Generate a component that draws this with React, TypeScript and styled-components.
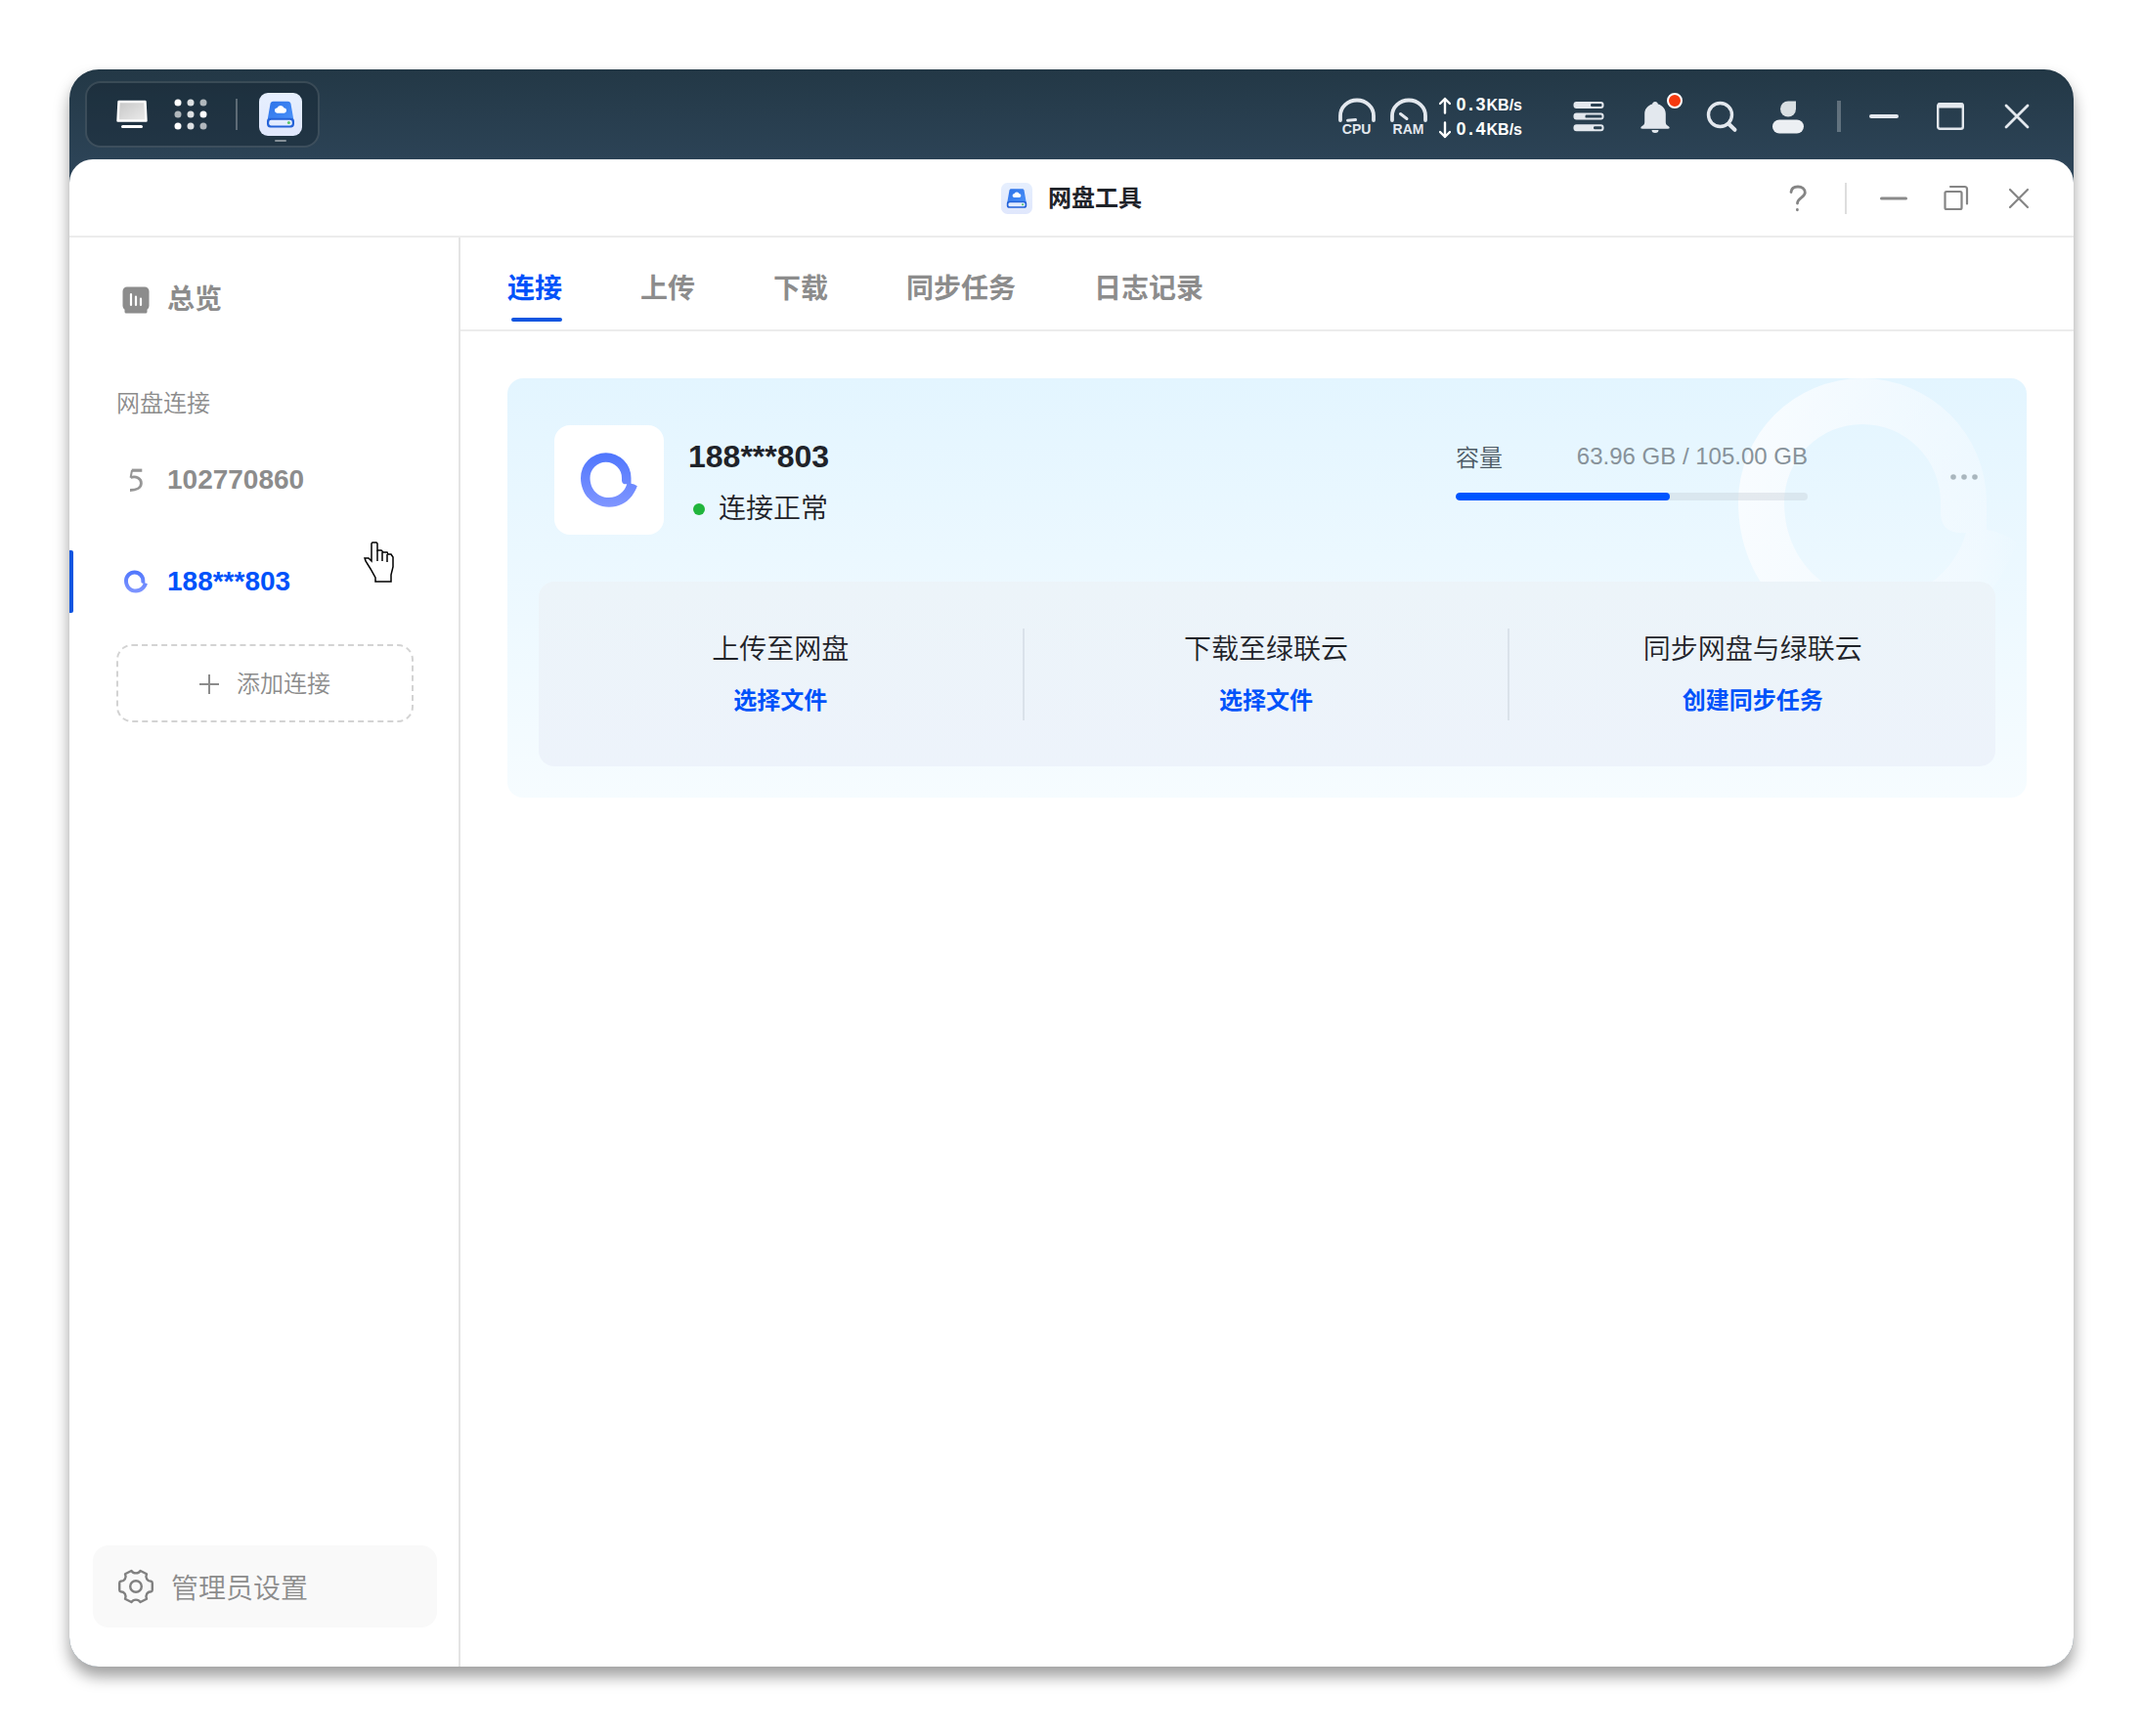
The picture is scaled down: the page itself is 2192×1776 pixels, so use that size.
import React, { useState } from "react";
import styled, { createGlobalStyle } from "styled-components";

const color = {
  blue: "#0052fa",
  accent: "#0f55e0",
  text: "#1f2329",
  muted: "#8c8c8c",
  line: "#ececec",
  chrome: "#e3e8ee",
};

const GlobalStyle = createGlobalStyle`
  *, *::before, *::after { box-sizing: border-box; }
  body {
    margin: 0;
    background: #fff;
    color: ${color.text};
    font-family: "Liberation Sans", "Noto Sans CJK SC", sans-serif;
  }
  button { font-family: inherit; }
`;

const Desktop = styled.div`
  min-height: 100vh;
  padding: 71px;
  display: flex;
  flex-direction: column;
`;

const Screen = styled.div`
  flex: 1;
  display: flex;
  flex-direction: column;
  border-radius: 30px;
  overflow: hidden;
  background: linear-gradient(#233846 0, #2c4356 92px, #2c4459 130px);
`;

const Shadow = styled.div`
  flex: 1;
  display: flex;
  border-radius: 30px;
  box-shadow: 0 10px 16px rgba(0, 0, 0, 0.38);
  > * { min-width: 0; }
`;

const Row = styled.div<{ $gap?: number }>`
  display: flex;
  align-items: center;
  gap: ${(p) => p.$gap ?? 0}px;
`;

const TopBar = styled.header`
  height: 92px;
  padding: 0 42px 0 16px;
  display: flex;
  align-items: center;
  justify-content: space-between;
`;

const Dock = styled.nav`
  height: 68px;
  padding: 0 16px 0 24px;
  display: flex;
  align-items: center;
  gap: 16px;
  border: 2px solid rgba(255, 255, 255, 0.13);
  border-radius: 16px;
  background: rgba(20, 36, 48, 0.4);
`;

const DockButton = styled.button<{ $running?: boolean }>`
  position: relative;
  width: 44px;
  height: 44px;
  padding: 0;
  border: 0;
  background: none;
  display: grid;
  place-items: center;
  &::after {
    content: "";
    display: ${(p) => (p.$running ? "block" : "none")};
    position: absolute;
    left: 16px;
    bottom: -6px;
    width: 12px;
    height: 2px;
    border-radius: 1px;
    background: rgba(255, 255, 255, 0.45);
  }
`;

const DockDivider = styled.span`
  width: 2px;
  height: 32px;
  margin: 0 6px 0 8px;
  background: rgba(255, 255, 255, 0.28);
`;

const StatusArea = styled.div`
  display: flex;
  align-items: center;
  gap: 52px;
  padding-top: 4px;
`;

const Gauge = styled.div`
  width: 38px;
  display: flex;
  flex-direction: column;
  align-items: center;
  color: ${color.chrome};
  font-size: 14px;
  line-height: 12px;
  font-weight: 700;
`;

const Monitors = styled.div`
  display: flex;
  align-items: center;
  gap: 12px;
`;

const Speeds = styled.div`
  padding-top: 2px;
  color: #fff;
  font-weight: 700;
  line-height: 24px;
`;

const SpeedRow = styled.div`
  display: flex;
  align-items: center;
  gap: 6px;
`;

const SpeedValue = styled.span`
  display: flex;
  align-items: baseline;
  font-size: 18px;
`;

const Digit = styled.span`
  width: 10px;
  text-align: center;
`;

const SpeedUnit = styled.span`
  padding-left: 1px;
  font-size: 16px;
`;

const IconButton = styled.button`
  position: relative;
  width: 32px;
  height: 32px;
  padding: 0;
  border: 0;
  background: none;
  display: grid;
  place-items: center;
  svg { overflow: visible; }
`;

const Badge = styled.span`
  position: absolute;
  top: -8px;
  right: -12px;
  width: 16px;
  height: 16px;
  border: 2px solid #fff;
  border-radius: 50%;
  background: #f5390f;
`;

const StatusDivider = styled.span`
  width: 4px;
  height: 32px;
  margin: 0 28px 0 34px;
  background: rgba(255, 255, 255, 0.27);
`;

const AppWindow = styled.section`
  flex: 1;
  display: flex;
  flex-direction: column;
  background: #fff;
  border-radius: 24px 24px 0 0;
  overflow: hidden;
`;

const TitleBar = styled.div`
  height: 80px;
  padding: 2px 40px 0;
  display: grid;
  grid-template-columns: 1fr auto 1fr;
  align-items: center;
  border-bottom: 2px solid ${color.line};
`;

const Title = styled.h1`
  grid-column: 2;
  margin: 0;
  display: flex;
  align-items: center;
  gap: 16px;
  font-size: 24px;
  line-height: 32px;
  font-weight: 700;
`;

const TitleActions = styled.div`
  justify-self: end;
  display: flex;
  align-items: center;
  gap: 32px;
`;

const TitleDivider = styled.span`
  width: 2px;
  height: 32px;
  background: #dedede;
`;

const Body = styled.div`
  flex: 1;
  display: grid;
  grid-template-columns: 400px minmax(0, 1fr);
`;

const Sidebar = styled.aside`
  display: flex;
  flex-direction: column;
  justify-content: space-between;
  padding: 32px 0 40px;
  border-right: 2px solid #e4e4e4;
`;

const NavButton = styled.button<{ $active?: boolean }>`
  width: 100%;
  height: 64px;
  padding: 0 48px;
  display: flex;
  align-items: center;
  gap: 12px;
  border: 0;
  background: none;
  color: ${(p) => (p.$active ? color.blue : color.muted)};
  font-size: 28px;
  line-height: 40px;
  font-weight: 700;
  &::before {
    content: "";
    display: ${(p) => (p.$active ? "block" : "none")};
    position: absolute;
    left: 0;
    top: 0;
    width: 4px;
    height: 64px;
    border-radius: 0 2px 2px 0;
    background: ${color.accent};
  }
`;

const NavIcon = styled.span`
  width: 40px;
  height: 40px;
  display: grid;
  place-items: center;
`;

const SectionLabel = styled.h2`
  margin: 58px 48px 30px;
  color: ${color.muted};
  font-size: 24px;
  line-height: 32px;
  font-weight: 350;
`;

const NavList = styled.ul`
  margin: 0;
  padding: 0;
  list-style: none;
  display: flex;
  flex-direction: column;
  gap: 40px;
`;

const NavItem = styled.li`
  position: relative;
`;

const Pointer = styled.svg`
  position: absolute;
  left: 301px;
  top: -9px;
  pointer-events: none;
`;

const AddButton = styled.button`
  width: calc(100% - 94px);
  height: 80px;
  margin: 32px 46px 0 48px;
  padding: 2px 0 0;
  display: flex;
  align-items: center;
  justify-content: center;
  gap: 18px;
  border: 2px dashed #d3d3d3;
  border-radius: 16px;
  background: none;
  color: ${color.muted};
  font-size: 24px;
  line-height: 32px;
  font-weight: 350;
`;

const AdminButton = styled.button`
  height: 84px;
  margin: 0 22px 0 24px;
  padding: 0 26px;
  display: flex;
  align-items: center;
  gap: 18px;
  border: 0;
  border-radius: 16px;
  background: #f9f9f9;
  color: ${color.muted};
  font-size: 28px;
  line-height: 40px;
  font-weight: 350;
`;

const AdminLabel = styled.span`
  padding-top: 6px;
`;

const Main = styled.main`
  display: flex;
  flex-direction: column;
`;

const Tabs = styled.div`
  height: 96px;
  padding: 0 48px;
  display: flex;
  gap: 80px;
  border-bottom: 2px solid ${color.line};
`;

const Tab = styled.button<{ $active: boolean }>`
  position: relative;
  padding: 12px 0 0;
  border: 0;
  background: none;
  display: flex;
  align-items: center;
  height: 94px;
  color: ${(p) => (p.$active ? color.blue : color.muted)};
  font-size: 28px;
  line-height: 40px;
  font-weight: 700;
  &::after {
    content: "";
    display: ${(p) => (p.$active ? "block" : "none")};
    position: absolute;
    left: 4px;
    right: 0;
    bottom: 8px;
    height: 4px;
    border-radius: 2px;
    background: ${color.accent};
  }
`;

const Card = styled.article`
  position: relative;
  margin: 48px;
  padding: 48px 32px 32px;
  border-radius: 16px;
  overflow: hidden;
  background: linear-gradient(#e3f5ff, #f6fcff);
`;

const CardMark = styled.svg`
  position: absolute;
  top: 0;
  right: 9px;
`;

const Account = styled.div`
  position: relative;
  margin-bottom: 48px;
  padding: 0 16px;
  height: 112px;
  display: flex;
  align-items: flex-start;
`;

const LogoTile = styled.div`
  width: 112px;
  height: 112px;
  display: grid;
  place-items: center;
  border-radius: 16px;
  background: #fff;
`;

const Identity = styled.div`
  flex: 1;
  padding: 12px 0 0 25px;
`;

const AccountName = styled.h2`
  margin: 0 0 14px;
  font-size: 32px;
  line-height: 40px;
  font-weight: 700;
`;

const Status = styled.p`
  margin: 0;
  padding-left: 5px;
  display: flex;
  align-items: center;
  gap: 14px;
  font-size: 28px;
  line-height: 40px;
  font-weight: 350;
  &::before {
    content: "";
    width: 12px;
    height: 12px;
    border-radius: 50%;
    background: #20b53c;
  }
`;

const Capacity = styled.div`
  width: 360px;
  padding-top: 16px;
`;

const CapacityText = styled.div`
  display: flex;
  justify-content: space-between;
  margin-bottom: 19px;
  font-size: 24px;
  line-height: 32px;
  font-weight: 350;
  color: #4c5a64;
`;

const CapacityLabel = styled.span`
  padding-top: 2px;
`;

const Usage = styled.span`
  color: #87929a;
`;

const Track = styled.div`
  height: 8px;
  border-radius: 4px;
  background: rgba(190, 200, 208, 0.34);
  overflow: hidden;
`;

const Fill = styled.div`
  height: 100%;
  border-radius: 4px;
  background: #0055ff;
`;

const MoreButton = styled(IconButton)`
  margin: 37px 0 0 144px;
`;

const Actions = styled.div`
  position: relative;
  height: 189px;
  display: grid;
  grid-template-columns: repeat(3, 1fr);
  align-items: center;
  border-radius: 16px;
  background: linear-gradient(#ecf4f9, #edf3fb);
`;

const Action = styled.div`
  height: 94px;
  padding-top: 2px;
  display: flex;
  flex-direction: column;
  align-items: center;
  gap: 16px;
  font-size: 28px;
  line-height: 40px;
  font-weight: 350;
  &:not(:last-child) { border-right: 2px solid #dae2ea; }
`;

const ActionLink = styled.a`
  color: ${color.blue};
  font-size: 24px;
  line-height: 32px;
  font-weight: 700;
  text-decoration: none;
`;

const MARK_BOX = "-127 -127 286 274";
const MARK_PATH =
  "M127 28V0A127 127 0 0 0-127 0C-127 82-66 147 16 147C88 147 136 102 158 41Q143 30 127 28Z" +
  "M80 12V0A80 80 0 0 0-80 0C-80 56-40 99 15 99C60 99 95 70 106 31Q81 33 80 12Z";

function CloudMark({ size }: { size: number }) {
  return (
    <svg width={size} height={size} viewBox={MARK_BOX} aria-hidden>
      <defs>
        <linearGradient id={"mark" + size} gradientUnits="userSpaceOnUse" x1="0" y1="-127" x2="0" y2="147">
          <stop offset="0" stopColor="#4f76fd" />
          <stop offset="1" stopColor="#8096ff" />
        </linearGradient>
      </defs>
      <path d={MARK_PATH} fill={`url(#mark${size})`} fillRule="evenodd" />
    </svg>
  );
}

function DriveIcon({ size, id }: { size: number; id: string }) {
  return (
    <svg width={size} height={size} viewBox="0 0 44 44" aria-hidden>
      <defs>
        <linearGradient id={id + "bg"} x1="0" y1="0" x2="0" y2="1">
          <stop offset="0" stopColor="#e6effe" />
          <stop offset="1" stopColor="#e0e7fc" />
        </linearGradient>
        <linearGradient id={id + "d"} x1="0" y1="0" x2="1" y2="1">
          <stop offset="0" stopColor="#2d72e8" />
          <stop offset="1" stopColor="#4c93fa" />
        </linearGradient>
      </defs>
      <rect width="44" height="44" rx="9" fill={`url(#${id}bg)`} />
      <path d="M14.500 8.700h15c1.800 0 2.700.9 3 2.500L35.600 29H8.400l3.100-17.800c.3-1.600 1.200-2.500 3-2.500z" fill={`url(#${id}d)`} />
      <rect x="8" y="25.8" width="28" height="9.6" rx="3.6" fill="#2462d8" />
      <rect x="10.2" y="27.8" width="23.6" height="5.6" rx="2.2" fill="#e3ecff" />
      <circle cx="30.4" cy="30.6" r="1.5" fill="#58c46a" />
      <path d="M18.800 20.700a2.600 2.600 0 0 1-.4-5.200 3.800 3.800 0 0 1 7.200 0 2.600 2.600 0 0 1-.4 5.200z" fill="#fff" />
    </svg>
  );
}

function DesktopIcon() {
  return (
    <svg width="32" height="30" viewBox="0 0 32 30" aria-hidden>
      <defs>
        <linearGradient id="screen" x1="0" y1="0" x2="1" y2="1">
          <stop offset="0" stopColor="#c6c6c6" />
          <stop offset="1" stopColor="#ececec" />
        </linearGradient>
      </defs>
      <path d="M2.500 2h27l1 19.500h-29z" fill="url(#screen)" stroke="#fff" strokeWidth="2.4" strokeLinejoin="round" />
      <rect x="5" y="26" width="22" height="3" rx="1.5" fill="#fff" />
    </svg>
  );
}

const DOTS = [1, 0.85, 0.65, 0.65, 0.85, 1, 1, 0.85, 0.65];

function LauncherIcon() {
  return (
    <svg width="34" height="32" viewBox="0 0 34 32" aria-hidden>
      {DOTS.map((o, i) => (
        <circle key={i} cx={4 + (i % 3) * 13} cy={4 + Math.floor(i / 3) * 12} r="3.5" fill="#fff" opacity={o} />
      ))}
    </svg>
  );
}

function GaugeDial({ needle }: { needle: string }) {
  return (
    <svg width="38" height="26" viewBox="0 0 38 26" fill="none" stroke={color.chrome} strokeLinecap="round" aria-hidden>
      <path d="M2 23v-4.500a17 16 0 0 1 34 0V23" strokeWidth="3.8" />
      <path d={needle} strokeWidth="3" />
    </svg>
  );
}

function Speed({ up, value }: { up: boolean; value: string }) {
  return (
    <SpeedRow>
      <svg width="12" height="18" viewBox="0 0 12 18" fill="none" stroke="#fff" strokeWidth="2.4" strokeLinecap="round" strokeLinejoin="round" aria-hidden>
        <path d={up ? "M6 16.500V2M1 7l5-5 5 5" : "M6 1.500V16M1 11l5 5 5-5"} />
      </svg>
      <SpeedValue>
        {value.split("").map((c, i) => (
          <Digit key={i}>{c}</Digit>
        ))}
        <SpeedUnit>KB/s</SpeedUnit>
      </SpeedValue>
    </SpeedRow>
  );
}

function StorageIcon() {
  const slots = [18, 12.5, 21];
  return (
    <svg width="32" height="32" viewBox="0 0 32 32" aria-hidden>
      {slots.map((x, i) => (
        <g key={i}>
          <rect x="0.5" y={1 + i * 11.6} width="31" height="7" rx="3" fill={color.chrome} />
          <rect x={x} y={3 + i * 11.6} width={29.5 - x} height="3" rx="1.2" fill="#2a4051" />
        </g>
      ))}
    </svg>
  );
}

function BellIcon() {
  return (
    <svg width="32" height="34" viewBox="0 0 32 34" fill={color.chrome} aria-hidden>
      <path d="M16 1c1.600 0 2.700 1 2.900 2.500C23.600 4.800 26.800 8.600 26.800 13.500V22c0 2.200 1 3 2.600 3.900.8.500 1.300 1 1.300 1.700 0 .8-.6 1.200-1.500 1.200H2.800c-.9 0-1.500-.4-1.500-1.200 0-.7.5-1.200 1.300-1.700C4.200 25 5.200 24.200 5.200 22v-8.500c0-4.900 3.200-8.700 7.900-10C13.300 2 14.400 1 16 1z" />
      <path d="M12.500 30h7a3.500 3 0 0 1-7 0z" />
    </svg>
  );
}

function SearchIcon() {
  return (
    <svg width="32" height="32" viewBox="0 0 32 32" fill="none" stroke={color.chrome} strokeWidth="3.4" strokeLinecap="round" aria-hidden>
      <circle cx="14.5" cy="14.5" r="12" />
      <path d="M23 23.500l6.500 6.300" strokeWidth="4" />
    </svg>
  );
}

function UserIcon() {
  return (
    <svg width="32" height="34" viewBox="0 0 32 34" aria-hidden>
      <path d="M16 .5h8v8a8 8 0 1 1-8-8z" fill="#d9dfe2" />
      <rect x="0" y="19.5" width="32" height="14" rx="7" fill="#eceff3" />
    </svg>
  );
}

type LineProps = { d: string; stroke?: string; width?: number };

function LineIcon({ d, stroke = color.chrome, width = 3 }: LineProps) {
  return (
    <svg width="32" height="32" viewBox="0 0 32 32" fill="none" stroke={stroke} strokeWidth={width} strokeLinecap="round" strokeLinejoin="round" aria-hidden>
      <path d={d} />
    </svg>
  );
}

function OverviewIcon() {
  return (
    <svg width="28" height="28" viewBox="0 0 28 28" aria-hidden>
      <path d="M5 .5h18a4.500 4.500 0 0 1 4.500 4.500v15a4.500 4.500 0 0 1-2 3.700v2.300a1.500 1.500 0 0 1-1.500 1.500H4A1.500 1.500 0 0 1 2.500 26v-2.300a4.500 4.500 0 0 1-2-3.700V5A4.500 4.500 0 0 1 5 .5z" fill={color.muted} />
      <path d="M9 8v11M14 10.500V19M19 12.500V19" stroke="#fff" strokeWidth="2.2" strokeLinecap="round" />
    </svg>
  );
}

function FiveIcon() {
  return (
    <svg width="16" height="24" viewBox="0 0 16 24" fill="none" stroke="#969696" aria-hidden>
      <path d="M3.800 2.200h10.500" strokeWidth="3.2" />
      <path d="M4 2L2.600 9.800" strokeWidth="2" />
      <path d="M2.600 9.500c5-1.600 10.800.3 10.800 5.700 0 4.600-4.700 7.300-11.400 7.300" strokeWidth="2.8" />
    </svg>
  );
}

function GearIcon() {
  return (
    <svg width="36" height="36" viewBox="0 0 36 36" fill="none" stroke="#808080" strokeWidth="2.4" strokeLinejoin="round" aria-hidden>
      <circle cx="18" cy="18" r="5.8" />
      <path d="M13.400 2C15.500 5.200 20.500 5.200 22.600 2L29 5.200C27.400 8.800 29.500 12.600 33.600 12.800Q34.800 13 34.800 14.500V21.500Q34.800 23 33.600 23.200C29.500 23.400 27.400 27.200 29 30.800L22.600 34C20.500 30.800 15.500 30.800 13.400 34L7 30.800C8.600 27.200 6.500 23.400 2.400 23.200Q1.200 23 1.200 21.500V14.500Q1.200 13 2.400 12.800C6.500 12.600 8.600 8.800 7 5.200Z" />
    </svg>
  );
}

const TABS = ["连接", "上传", "下载", "同步任务", "日志记录"];

const ACTIONS = [
  { title: "上传至网盘", link: "选择文件" },
  { title: "下载至绿联云", link: "选择文件" },
  { title: "同步网盘与绿联云", link: "创建同步任务" },
];

const USED = 63.96;
const TOTAL = 105;

export default function App() {
  const [tab, setTab] = useState(TABS[0]);
  return (
    <>
      <GlobalStyle />
      <Desktop>
        <Shadow>
          <Screen>
            <TopBar>
              <Dock aria-label="任务栏">
                <DockButton aria-label="桌面"><DesktopIcon /></DockButton>
                <DockButton aria-label="应用"><LauncherIcon /></DockButton>
                <DockDivider />
                <DockButton aria-label="网盘工具" $running><DriveIcon size={44} id="dock" /></DockButton>
              </Dock>
              <StatusArea>
                <Monitors>
                  <Row $gap={15}>
                    <Gauge><GaugeDial needle="M9.500 23.200L17.500 22.600" />CPU</Gauge>
                    <Gauge><GaugeDial needle="M10.500 16.500L17 21.500" />RAM</Gauge>
                  </Row>
                  <Speeds>
                    <Speed up value="0.3" />
                    <Speed up={false} value="0.4" />
                  </Speeds>
                </Monitors>
                <Row>
                  <Row $gap={36}>
                    <IconButton aria-label="存储"><StorageIcon /></IconButton>
                    <IconButton aria-label="通知"><BellIcon /><Badge /></IconButton>
                    <IconButton aria-label="搜索"><SearchIcon /></IconButton>
                    <IconButton aria-label="用户"><UserIcon /></IconButton>
                  </Row>
                  <StatusDivider />
                  <Row $gap={36}>
                    <IconButton aria-label="最小化"><LineIcon d="M3 16h26" width={4} /></IconButton>
                    <IconButton aria-label="最大化">
                      <svg width="28" height="28" viewBox="0 0 28 28" aria-hidden>
                        <rect x="1.2" y="1.2" width="25.6" height="25.6" rx="2" fill="none" stroke={color.chrome} strokeWidth="2.4" />
                        <path d="M1.200 3h25.600" stroke={color.chrome} strokeWidth="5" />
                      </svg>
                    </IconButton>
                    <IconButton aria-label="关闭"><LineIcon d="M5 5l22 22M27 5L5 27" width={2.8} /></IconButton>
                  </Row>
                </Row>
              </StatusArea>
            </TopBar>

            <AppWindow>
              <TitleBar>
                <Title><DriveIcon size={32} id="title" />网盘工具</Title>
                <TitleActions>
                  <IconButton aria-label="帮助">
                    <LineIcon d="M9 9.500c.3-3.300 3-5.500 7-5.500 4.200 0 7.300 2.300 7.300 6 0 5-7.800 5.200-7.800 11M15.400 27.400v.4" stroke="#858585" width={2.8} />
                  </IconButton>
                  <TitleDivider />
                  <IconButton aria-label="最小化窗口"><LineIcon d="M3.500 16h25" stroke="#8a8a8a" width={3} /></IconButton>
                  <IconButton aria-label="还原窗口">
                    <LineIcon d="M6 9h14q1.500 0 1.500 1.500v15q0 1.500-1.500 1.500h-14q-1.500 0-1.500-1.500v-15q0-1.500 1.500-1.500M10 4h14.500q2.500 0 2.500 2.500v15" stroke="#858585" width={2.2} />
                  </IconButton>
                  <IconButton aria-label="关闭窗口"><LineIcon d="M7 7l18 18M25 7L7 25" stroke="#858585" width={2.2} /></IconButton>
                </TitleActions>
              </TitleBar>

              <Body>
                <Sidebar>
                  <div>
                    <NavButton><NavIcon><OverviewIcon /></NavIcon>总览</NavButton>
                    <SectionLabel>网盘连接</SectionLabel>
                    <NavList>
                      <NavItem>
                        <NavButton><NavIcon><FiveIcon /></NavIcon>102770860</NavButton>
                      </NavItem>
                      <NavItem>
                        <NavButton $active><NavIcon><CloudMark size={24} /></NavIcon>188***803</NavButton>
                        <Pointer width="32" height="43" viewBox="-1 -1 32 43" aria-hidden>
                          <path d="M8 0h4l1 1v7h4l2 2h4l1 2h3l2 3v10l-2 8v7H11v-4L6 27l-5-8-1-3h4l3 3V1z" fill="#fff" stroke="#000" strokeWidth="1.5" />
                          <path d="M13 8v11M18 10v9M23 12v8" stroke="#000" strokeWidth="1.5" />
                        </Pointer>
                      </NavItem>
                    </NavList>
                    <AddButton>
                      <svg width="20" height="20" viewBox="0 0 20 20" stroke={color.muted} strokeWidth="2" aria-hidden>
                        <path d="M10 0v20M0 10h20" />
                      </svg>
                      添加连接
                    </AddButton>
                  </div>
                  <AdminButton><GearIcon /><AdminLabel>管理员设置</AdminLabel></AdminButton>
                </Sidebar>

                <Main>
                  <Tabs role="tablist">
                    {TABS.map((name) => (
                      <Tab key={name} role="tab" aria-selected={tab === name} $active={tab === name} onClick={() => setTab(name)}>
                        {name}
                      </Tab>
                    ))}
                  </Tabs>
                  <Card>
                    <CardMark width="286" height="274" viewBox={MARK_BOX} aria-hidden>
                      <defs>
                        <linearGradient id="halo" gradientUnits="userSpaceOnUse" x1="-127" y1="0" x2="159" y2="60">
                          <stop offset="0" stopColor="#fbfdff" stopOpacity="0.85" />
                          <stop offset="0.85" stopColor="#f8fbff" stopOpacity="0.4" />
                          <stop offset="1" stopColor="#f8fbff" stopOpacity="0" />
                        </linearGradient>
                      </defs>
                      <path d={MARK_PATH} fill="url(#halo)" fillRule="evenodd" />
                    </CardMark>
                    <Account>
                      <LogoTile><CloudMark size={58} /></LogoTile>
                      <Identity>
                        <AccountName>188***803</AccountName>
                        <Status>连接正常</Status>
                      </Identity>
                      <Capacity>
                        <CapacityText>
                          <CapacityLabel id="capacity">容量</CapacityLabel>
                          <Usage>{USED.toFixed(2)} GB / {TOTAL.toFixed(2)} GB</Usage>
                        </CapacityText>
                        <Track role="progressbar" aria-labelledby="capacity" aria-valuemin={0} aria-valuemax={TOTAL} aria-valuenow={USED}>
                          <Fill style={{ width: `${(USED / TOTAL) * 100}%` }} />
                        </Track>
                      </Capacity>
                      <MoreButton aria-label="更多">
                        <svg width="32" height="32" viewBox="0 0 32 32" fill="#a9b6be" aria-hidden>
                          <circle cx="5" cy="16" r="2.8" />
                          <circle cx="16" cy="16" r="2.8" />
                          <circle cx="27" cy="16" r="2.8" />
                        </svg>
                      </MoreButton>
                    </Account>
                    <Actions>
                      {ACTIONS.map((a) => (
                        <Action key={a.title}>
                          {a.title}
                          <ActionLink href="#">{a.link}</ActionLink>
                        </Action>
                      ))}
                    </Actions>
                  </Card>
                </Main>
              </Body>
            </AppWindow>
          </Screen>
        </Shadow>
      </Desktop>
    </>
  );
}
